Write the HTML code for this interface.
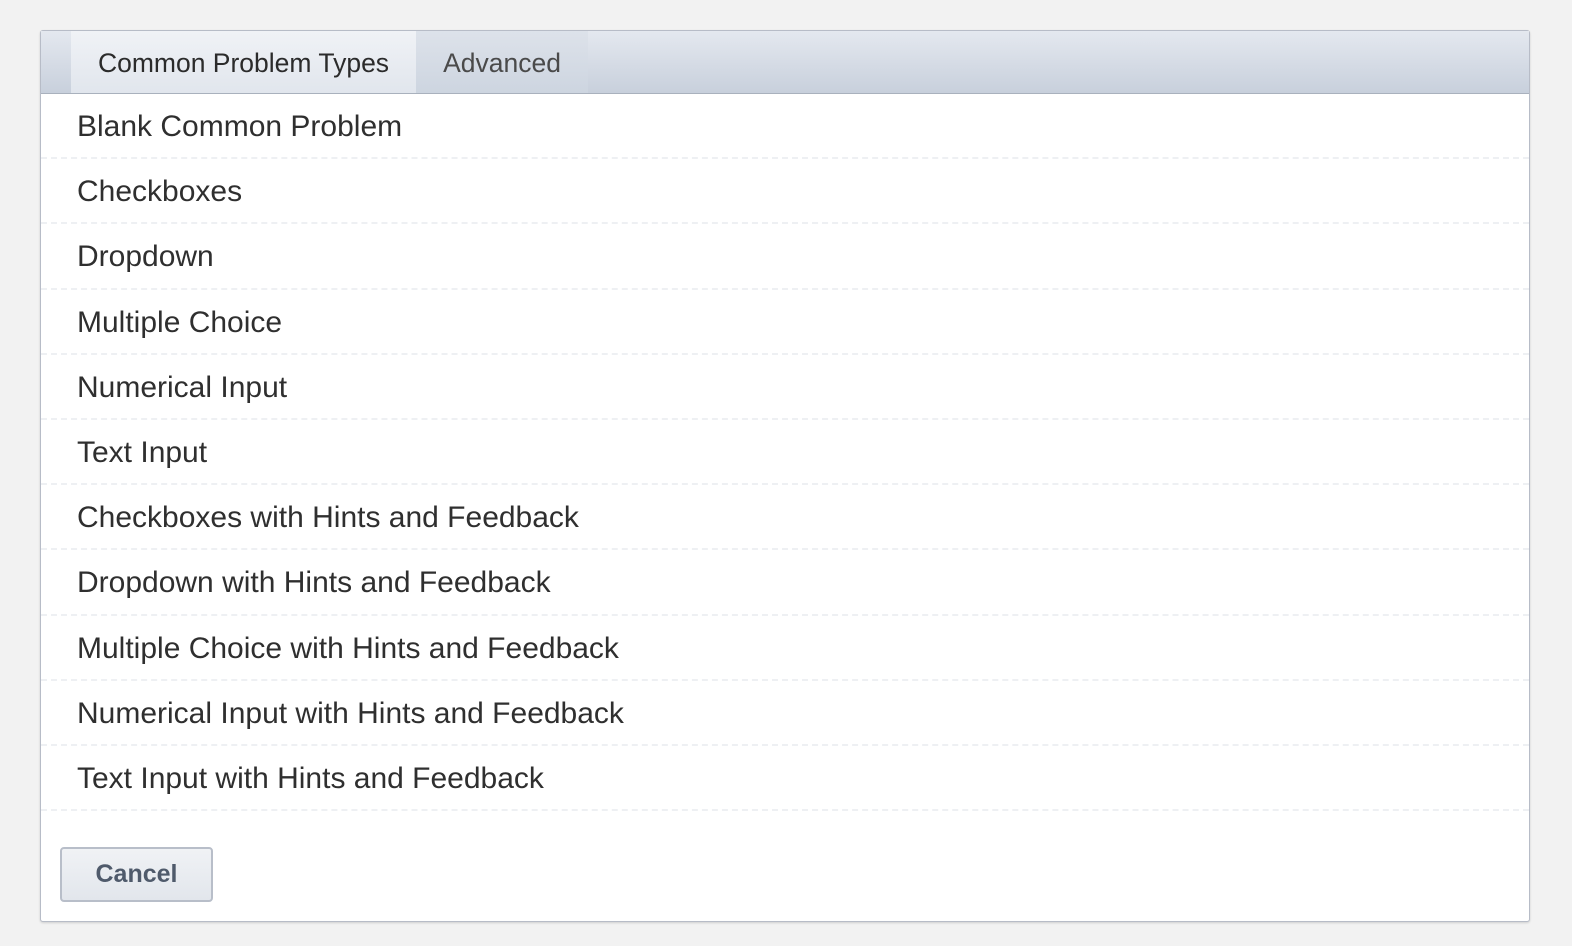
<!DOCTYPE html>
<html><head><style>
*{box-sizing:border-box;margin:0;padding:0}
body{width:1572px;height:946px;background:#f2f2f2;font-family:"Liberation Sans",sans-serif;position:relative;overflow:hidden}
.box{position:absolute;left:40px;top:30px;width:1490px;height:892px;background:#fff;border:1px solid #b7bcc7;border-radius:3px;box-shadow:0 1px 2px rgba(0,0,0,.15)}
.hdr{height:63px;background:linear-gradient(#e4e8ef,#c8d0dc);border-bottom:1px solid #a9b1bd;position:relative}
.tab{position:absolute;top:0;height:62px;line-height:64px;font-size:26.5px;color:#3b3b3b;text-align:center}
.t1{left:30px;width:345px;background:linear-gradient(#f0f2f6,#e1e6ed);color:#2b2b2b}
.t2{left:375px;width:172px;background:linear-gradient(#dde2ea,#cdd5e0);color:#4a4a4a}
.row{height:65.2px;border-bottom:2px dashed #eef0f3;padding-left:36px;font-size:30px;line-height:66px;color:#2f2f2f}
.btn{position:absolute;left:19px;top:816px;width:153px;height:55px;border:2px solid #b8bec9;border-radius:4px;background:linear-gradient(#f0f2f5,#e2e6ec);font-size:25px;font-weight:bold;color:#4f5a6b;text-align:center;line-height:50px}
</style></head><body>
<div class="box">
<div class="hdr"><div class="tab t1">Common Problem Types</div><div class="tab t2">Advanced</div></div>
<div class="row">Blank Common Problem</div>
<div class="row">Checkboxes</div>
<div class="row">Dropdown</div>
<div class="row">Multiple Choice</div>
<div class="row">Numerical Input</div>
<div class="row">Text Input</div>
<div class="row">Checkboxes with Hints and Feedback</div>
<div class="row">Dropdown with Hints and Feedback</div>
<div class="row">Multiple Choice with Hints and Feedback</div>
<div class="row">Numerical Input with Hints and Feedback</div>
<div class="row">Text Input with Hints and Feedback</div>
<div class="btn">Cancel</div>
</div>
</body></html>
